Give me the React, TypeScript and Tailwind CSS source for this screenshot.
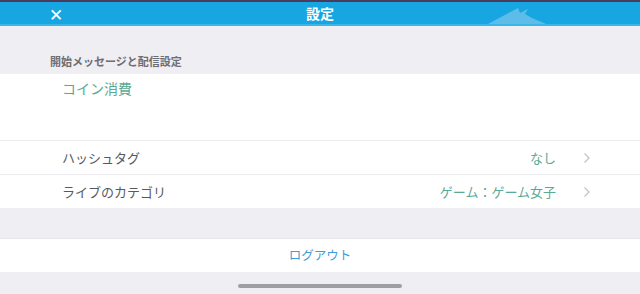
import React from "react";

const font = { fontFamily: '"Noto Sans CJK JP", "Noto Sans", sans-serif' };

type Row = { label: string; value: string };

const rows: Row[] = [
  { label: "ハッシュタグ", value: "なし" },
  { label: "ライブのカテゴリ", value: "ゲーム：ゲーム女子" },
];

const Chevron = () => (
  <svg width="8" height="12" viewBox="0 0 8 12" fill="none">
    <path d="M1.5 1.5 6 6l-4.5 4.5" stroke="#c4c4c8" strokeWidth="1.3" />
  </svg>
);

export default function App() {
  return (
    <div className="w-[640px] h-[294px] overflow-hidden bg-[#efeef3] flex flex-col" style={font}>
      <div className="h-[2px] bg-[#4b3b5c]" />
      <header className="relative h-[24px] bg-[#18a6e2] flex items-center justify-center border-b-2 border-[#3cb6ea]">
        <span className="absolute left-[49px] top-[2px] text-white text-[17px] leading-[20px] font-light">✕</span>
        <svg className="absolute left-[488px] bottom-0" width="60" height="18" viewBox="0 0 60 18">
          <path d="M0 18 L30 2 L32 7 L40 3 L37 8 L44 12 L58 18 Z" fill="#5dbde9" />
        </svg>
        <span className="text-white text-[14px] font-bold leading-none">設定</span>
      </header>

      <div className="h-[28px]" />
      <div className="h-[20px] pl-[50px] text-[11px] font-bold text-[#6d6d72] leading-[14px]">
        開始メッセージと配信設定
      </div>

      <section className="bg-white">
        <div className="h-[66px] pl-[62px] pt-[5px] text-[14px] text-[#5aa995] leading-[18px]">
          コイン消費
        </div>
        {rows.map((r) => (
          <div
            key={r.label}
            className="h-[34px] border-t border-[#ececef] flex items-center pl-[62px] pr-[49px] text-[13px]"
          >
            <span className="flex-1 text-[#59595d]">{r.label}</span>
            <span className="text-[#5aa995] mr-[27px]">{r.value}</span>
            <Chevron />
          </div>
        ))}
      </section>

      <div className="h-[30px]" />
      <div className="h-[34px] bg-white flex items-center justify-center text-[12.5px] text-[#3f9bd9] border-t border-[#e6e6ea]">
        ログアウト
      </div>

      <div className="flex-1 flex items-end justify-center pb-[6px]">
        <div className="w-[164px] h-[4px] rounded-full bg-[#9e9ea4]" />
      </div>
    </div>
  );
}
